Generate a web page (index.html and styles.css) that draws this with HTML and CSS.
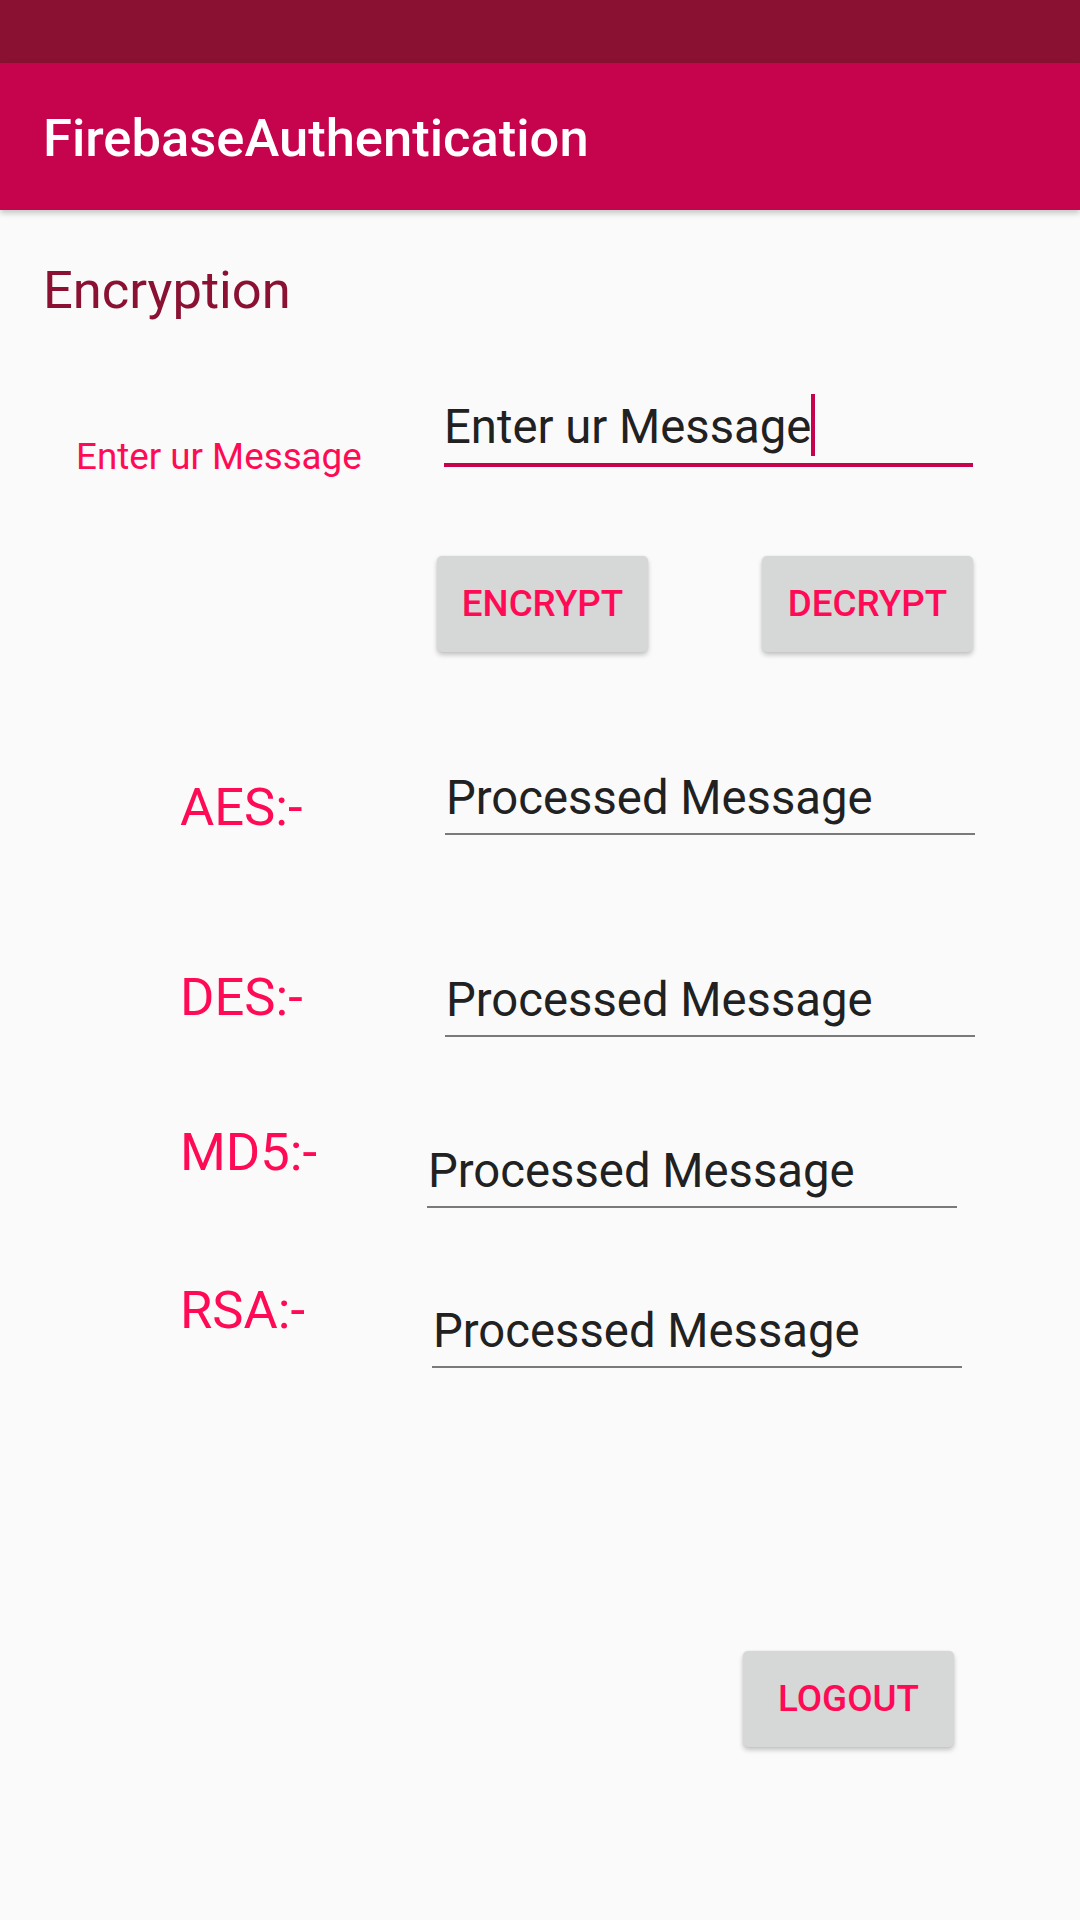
FILE: index.html
```html
<!DOCTYPE html>
<html>
<head>
<meta charset="utf-8">
<link rel="stylesheet" href="styles.css">
</head>
<body>
<div class="screen">
  <div class="status-bar"></div>
  <div class="app-bar"><span class="app-title">FirebaseAuthentication</span></div>
  <div class="content">
    <div class="heading">Encryption</div>

    <div class="input-row">
      <div class="input-label">Enter ur Message</div>
      <div class="input-field"><span class="input-text">Enter ur Message<span class="caret"></span></span></div>
    </div>

    <div class="button-row">
      <div class="btn">ENCRYPT</div>
      <div class="btn">DECRYPT</div>
    </div>

    <div class="algo-row row-aes">
      <div class="algo-label">AES:-</div>
      <div class="out-field">Processed Message</div>
    </div>
    <div class="algo-row row-des">
      <div class="algo-label">DES:-</div>
      <div class="out-field">Processed Message</div>
    </div>
    <div class="algo-row row-md5">
      <div class="algo-label">MD5:-</div>
      <div class="out-field">Processed Message</div>
    </div>
    <div class="algo-row row-rsa">
      <div class="algo-label">RSA:-</div>
      <div class="out-field">Processed Message</div>
    </div>

    <div class="logout-row">
      <div class="btn">LOGOUT</div>
    </div>
  </div>
</div>
</body>
</html>
```
FILE: styles.css
```css
html, body {
  margin: 0;
  padding: 0;
  background: #fafafa;
}
.screen {
  width: 1080px;
  height: 1920px;
  background: #fafafa;
  font-family: Roboto, "Liberation Sans", sans-serif;
  overflow: hidden;
}
.status-bar {
  height: 63px;
  background: #8a1132;
}
.app-bar {
  height: 147px;
  background: #c6034d;
  display: flex;
  align-items: center;
  padding-left: 43px;
  box-shadow: 0 3px 6px rgba(0, 0, 0, 0.22);
  position: relative;
  z-index: 1;
}
.app-title {
  color: #ffffff;
  font-size: 52.5px;
  font-weight: 500;
  line-height: 60px;
  margin-top: 2px;
}
.content {
  display: flex;
  flex-direction: column;
}
.heading {
  margin-top: 50px;
  margin-left: 43px;
  font-size: 52.5px;
  line-height: 60px;
  color: #8a1132;
}
.input-row {
  display: flex;
  align-items: flex-start;
  margin-top: 79px;
  height: 68px;
}
.input-label {
  margin-left: 76px;
  width: 368px;
  margin-top: 36px;
  font-size: 36.75px;
  line-height: 44px;
  color: #ff0a55;
}
.input-field {
  width: 529px;
  padding-bottom: 8px;
  border-bottom: 4px solid #c6034d;
  font-size: 47.25px;
  line-height: 56px;
  color: #212121;
}
.input-text {
  position: relative;
}
.caret {
  position: absolute;
  left: 100%;
  top: -5px;
  width: 4px;
  height: 62px;
  background: #c6034d;
}
.button-row {
  display: flex;
  margin-top: 89px;
  margin-left: 437px;
  gap: 114px;
}
.btn {
  width: 211px;
  height: 96px;
  background: #d6d7d7;
  border-radius: 5px;
  box-shadow: 0 3px 5px rgba(0, 0, 0, 0.22), 0 0 2px rgba(0, 0, 0, 0.08);
  display: flex;
  align-items: center;
  justify-content: center;
  color: #ff0a55;
  font-size: 36.75px;
  font-weight: 500;
  line-height: 44px;
}
.algo-row {
  display: flex;
  align-items: flex-start;
  padding-left: 180px;
}
.algo-label {
  font-size: 52.5px;
  line-height: 60px;
  color: #ff0a55;
}
.out-field {
  width: 529px;
  padding-left: 1px;
  padding-bottom: 7px;
  border-bottom: 2px solid #7a7a7a;
  font-size: 47.25px;
  line-height: 56px;
  color: #212121;
}
.row-aes {
  margin-top: 118px;
}
.row-aes .algo-label {
  width: 265px;
  margin-top: 7px;
}
.row-des {
  margin-top: 130px;
}
.row-des .algo-label {
  width: 265px;
}
.row-des .out-field {
  margin-top: 5px;
}
.row-md5 {
  margin-top: 85px;
}
.row-md5 .algo-label {
  width: 247px;
}
.row-md5 .out-field {
  margin-top: 21px;
}
.row-rsa {
  margin-top: 72px;
}
.row-rsa .algo-label {
  width: 252px;
}
.row-rsa .out-field {
  margin-top: 23px;
}
.logout-row {
  display: flex;
  margin-top: 283px;
  margin-left: 743px;
}
```
